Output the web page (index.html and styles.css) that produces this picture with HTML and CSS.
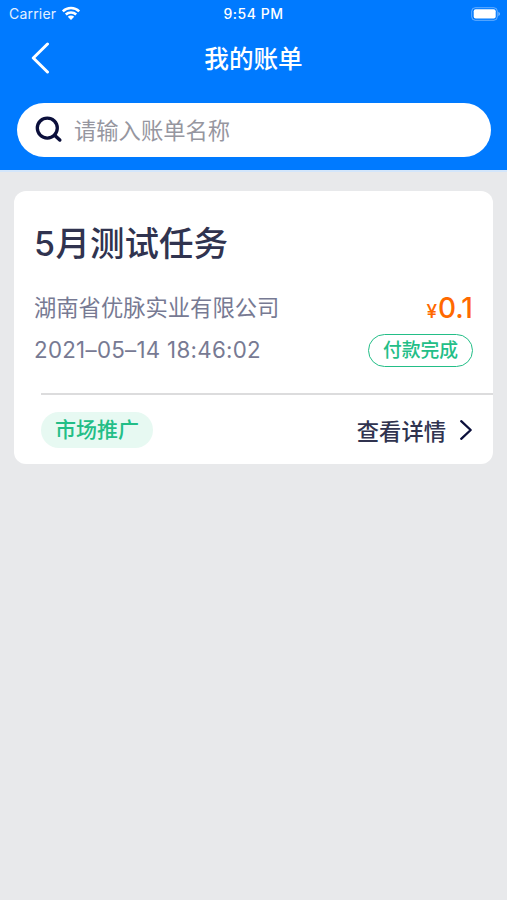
FILE: index.html
```html
<!DOCTYPE html>
<html lang="zh-CN">
<head>
    <meta charset="UTF-8">
    <meta name="viewport" content="width=device-width, initial-scale=1.0">
    <title>我的账单</title>
    <link rel="stylesheet" href="styles.css">
</head>
<body>
    <header>
        <div class="status-bar">
            <div class="carrier">
                <span>Carrier</span>
                <svg width="20" height="15" viewBox="0 0 20 15">
                    <path d="M1.8 5.4a11.8 11.8 0 0 1 16.4 0M4.8 8.5a7.5 7.5 0 0 1 10.4 0" fill="none" stroke="#fff" stroke-width="2.5"/>
                    <path d="M10 14l-3.2-3.2a4.6 4.6 0 0 1 6.4 0z" fill="#fff"/>
                </svg>
            </div>
            <span class="time">9:54 PM</span>
            <svg class="battery" width="30" height="14" viewBox="0 0 30 14">
                <rect x="0.7" y="0.7" width="25.6" height="12.6" rx="3.6" fill="none" stroke="#fff" stroke-opacity="0.4"/>
                <rect x="2.7" y="2.3" width="22" height="9.2" rx="2" fill="#fff"/>
                <path d="M27.4 4.8q3.2 2.2 0 4.4z" fill="#fff" fill-opacity="0.5"/>
            </svg>
        </div>

        <div class="nav-bar">
            <svg class="back" width="20" height="32" viewBox="0 0 20 32">
                <path d="M17.5 2L3.3 16L17.5 30" fill="none" stroke="#fff" stroke-width="3" stroke-linecap="round" stroke-linejoin="round"/>
            </svg>
            <h1>我的账单</h1>
        </div>

        <div class="search">
            <svg width="28" height="28" viewBox="0 0 28 28">
                <circle cx="12.3" cy="12.1" r="10" fill="none" stroke="#0b0f3b" stroke-width="3.3"/>
                <path d="M19.6 19.2L24.8 24" stroke="#0b0f3b" stroke-width="3.5" stroke-linecap="round"/>
            </svg>
            <input type="text" placeholder="请输入账单名称">
        </div>
    </header>

    <main>
        <section class="bill">
            <h2><span class="month">5</span>月测试任务</h2>
            <div class="row company-row">
                <span class="company">湖南省优脉实业有限公司</span>
                <span class="price"><small>¥</small>0.1</span>
            </div>
            <div class="row date-row">
                <span class="date">2021–05–14 18:46:02</span>
                <span class="state">付款完成</span>
            </div>
            <div class="bill-footer">
                <span class="tag">市场推广</span>
                <a class="detail" href="#">
                    <span>查看详情</span>
                    <svg width="14" height="22" viewBox="0 0 14 22">
                        <path d="M2.2 2.2L11.7 11L2.2 19.8" fill="none" stroke="#0b0f3b" stroke-width="2.3" stroke-linecap="round" stroke-linejoin="round"/>
                    </svg>
                </a>
            </div>
        </section>
    </main>
</body>
</html>
```
FILE: styles.css
```css
:root {
    --blue: #007aff;
    --navy: #30334f;
    --gray: #777a93;
    --green: #23be87;
    --orange: #ff6900;
}

* {
    box-sizing: border-box;
}

body {
    margin: 0;
    min-height: 100vh;
    background: #e8e9eb;
    font-family: Inter, 'Noto Sans CJK SC', sans-serif;
    color: var(--navy);
}

svg {
    display: block;
    flex: none;
}

header {
    height: 172px;
    background: var(--blue);
    border-bottom: 2px solid #d3e6fb;
}

.status-bar {
    display: grid;
    grid-template-columns: 1fr auto 1fr;
    align-items: center;
    height: 27px;
    padding: 0 6px 0 9px;
    color: #fff;
    font-size: 14px;
    line-height: 20px;
}

.carrier {
    display: flex;
    align-items: center;
    gap: 5px;
    color: #e4f0ff;
    letter-spacing: 0.2px;
}

.time {
    font-size: 14px;
    font-weight: 500;
    letter-spacing: 0.5px;
    margin-left: -3px;
}

.battery {
    justify-self: end;
}

.nav-bar {
    display: grid;
    grid-template-columns: 1fr auto 1fr;
    align-items: center;
    height: 62px;
    padding: 0 30px;
}

.nav-bar .back {
    margin-top: -1px;
}

h1 {
    margin: -2px 0 0;
    color: #fff;
    font-size: 24.6px;
    font-weight: 500;
}

.search {
    display: flex;
    align-items: center;
    gap: 11px;
    height: 54px;
    margin: 14px 16px 0 17px;
    padding: 0 18px;
    background: #fff;
    border-radius: 27px;
}

.search input {
    flex: 1;
    min-width: 0;
    padding: 1px 0 0;
    border: 0;
    outline: 0;
    background: transparent;
    font: inherit;
    font-size: 22.3px;
}

.search input::placeholder {
    color: #96969f;
}

main {
    padding: 19px 14px;
}

.bill {
    height: 273px;
    padding-top: 28px;
    background: #fff;
    border-radius: 12px;
}

h2 {
    margin: 0 20px;
    font-size: 34.5px;
    font-weight: 500;
    line-height: 50px;
}

.month {
    font-size: 34px;
    letter-spacing: 0.4px;
}

.row {
    display: flex;
    justify-content: space-between;
    align-items: center;
    padding: 0 20px;
    color: var(--gray);
    font-size: 22.3px;
}

.company-row {
    height: 42px;
    margin-top: 16px;
}

.date-row {
    height: 42px;
    margin-top: 2px;
}

.date {
    margin-top: -1px;
    letter-spacing: 0.28px;
}

.price {
    margin-top: 3px;
    color: var(--orange);
    font-size: 28px;
    font-weight: 500;
}

.price small {
    margin-right: 1px;
    font-size: 19px;
}

.state {
    width: 105px;
    height: 33px;
    border: 1.5px solid var(--green);
    border-radius: 17px;
    color: var(--green);
    font-size: 18.8px;
    font-weight: 500;
    line-height: 31px;
    text-align: center;
}

.bill-footer {
    display: flex;
    justify-content: space-between;
    align-items: center;
    height: 72px;
    margin: 22px 0 0 27px;
    padding-right: 20px;
    border-top: 2px solid #dcdcdd;
}

.tag {
    height: 36px;
    padding: 0 14px;
    background: #e7f9f2;
    border-radius: 18px;
    color: var(--green);
    font-size: 21px;
    font-weight: 500;
    line-height: 36px;
}

.detail {
    display: flex;
    align-items: center;
    gap: 13px;
    margin-top: -1px;
    color: var(--navy);
    font-size: 22.3px;
    font-weight: 500;
    text-decoration: none;
}
```
